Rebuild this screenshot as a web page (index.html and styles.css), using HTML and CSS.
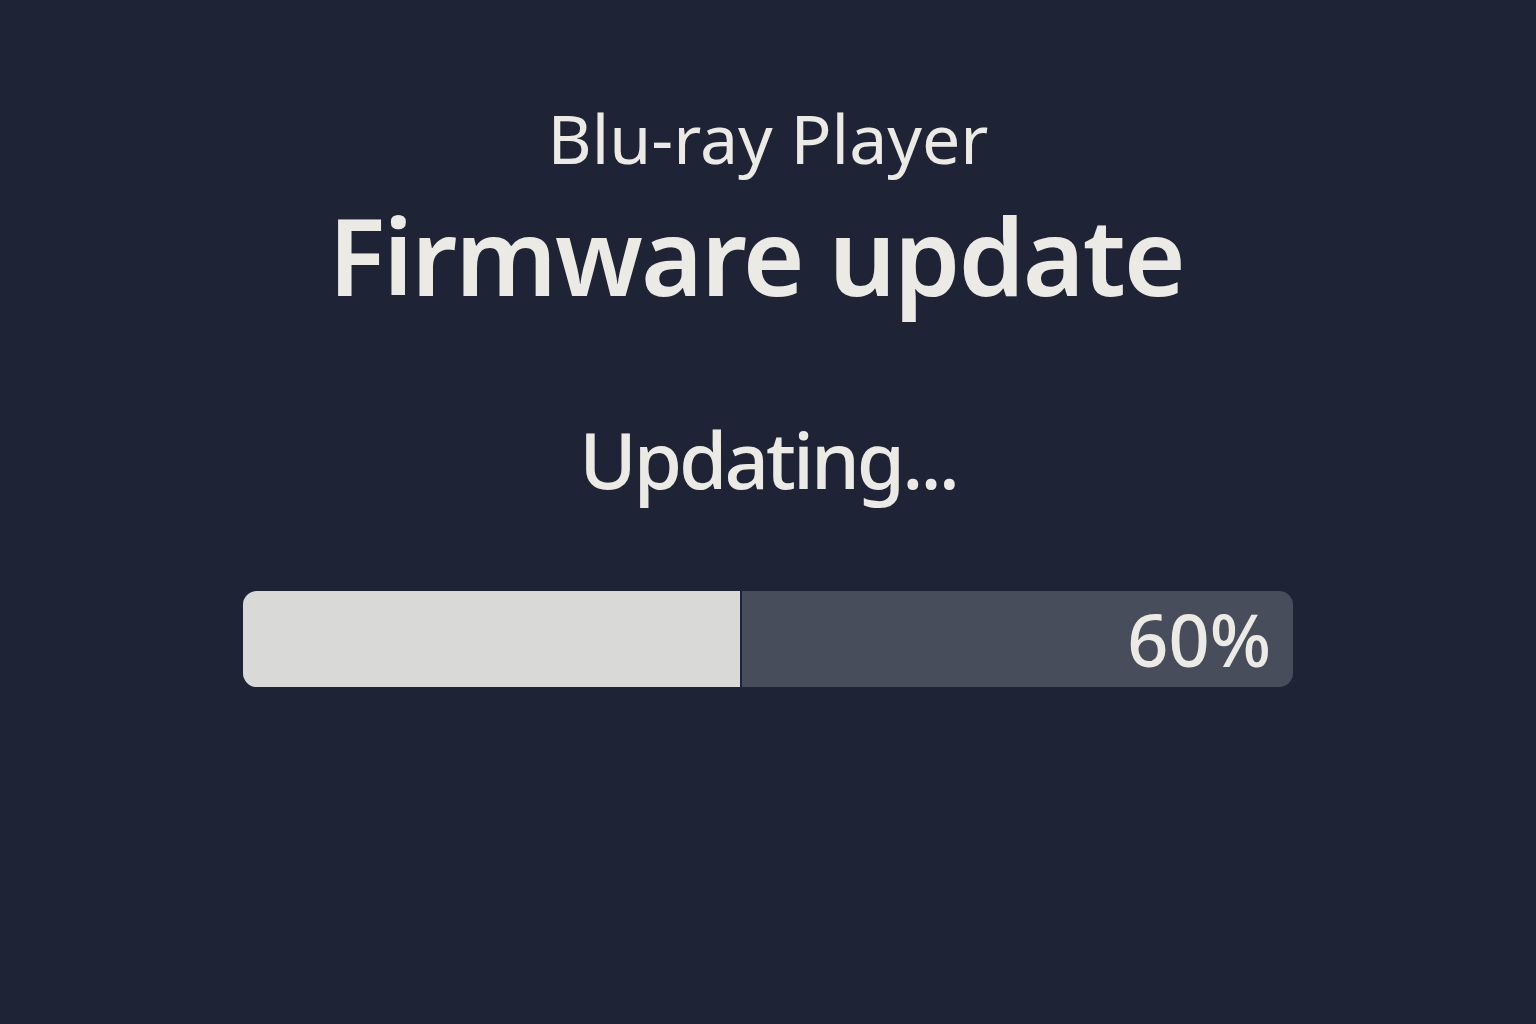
FILE: index.html
```html
<!doctype html>
<html lang="en">
    <head>
        <meta charset="UTF-8" />
        <meta name="viewport" content="width=device-width, initial-scale=1.0" />
        <title>Firmware update</title>
        <link rel="stylesheet" href="styles.css">
    </head>
    <body>
        <div class="screen">
            <header class="titles">
                <div class="device">Blu-ray Player</div>
                <h1>Firmware update</h1>
            </header>

            <div class="status">Updating...</div>

            <!-- Progress -->
            <div class="progress">
                <div class="progress-fill" style="width: 47.3%"></div>
                <span class="progress-value">60%</span>
            </div>
        </div>
    </body>
</html>
```

FILE: styles.css
```css
html,
body {
    margin: 0;
    height: 100%;
}
body {
    font-family: "Noto Sans", "Open Sans", sans-serif;
    background-color: #1e2435;
    color: #eceae4;
}
.screen {
    display: flex;
    flex-direction: column;
    align-items: center;
    padding-top: 93px;
}
.titles {
    display: flex;
    flex-direction: column;
    align-items: center;
}
.device {
    font-size: 68px;
    line-height: 90px;
}
h1 {
    margin: 5px 0 0 -24px;
    font-size: 106px;
    font-weight: 600;
    letter-spacing: -2px;
    line-height: 134px;
}
.status {
    margin-top: 87px;
    font-size: 78px;
    font-weight: 500;
    letter-spacing: -3px;
    line-height: 100px;
}
.progress {
    position: relative;
    display: flex;
    align-items: center;
    justify-content: flex-end;
    width: 1050px;
    height: 96px;
    margin-top: 82px;
    background-color: #474d5a;
    border-radius: 14px;
    overflow: hidden;
}
.progress-fill {
    position: absolute;
    left: 0;
    top: 0;
    bottom: 0;
    background-color: #d9d9d8;
    border-right: 2px solid #1e2435;
}
.progress-value {
    position: relative;
    padding-right: 22px;
    font-size: 72px;
    font-weight: 500;
    line-height: 1;
}
```
